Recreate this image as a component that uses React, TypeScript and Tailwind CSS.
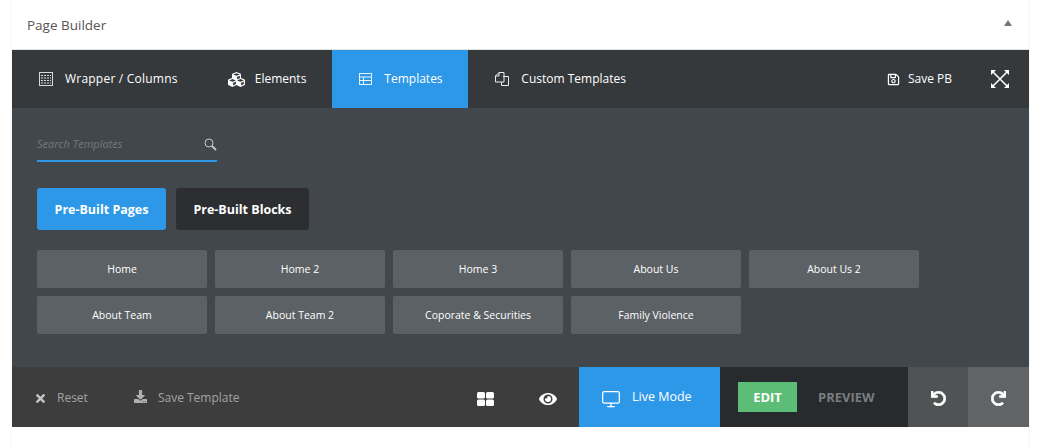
import React from 'react';
import { FaCubes, FaTimes, FaDownload, FaEye, FaUndo, FaRedo, FaRegSave } from 'react-icons/fa';
import { Monitor } from 'lucide-react';

const row1 = ['Home', 'Home 2', 'Home 3', 'About Us', 'About Us 2'];
const row2 = ['About Team', 'About Team 2', 'Coporate & Securities', 'Family Violence'];

function WrapperIcon() {
  return (
    <svg width="14" height="14" viewBox="0 0 14 14" fill="none" stroke="#d8d8d8" strokeWidth="1">
      <rect x="0.5" y="0.5" width="13" height="13" />
      <path d="M2 3.5h10M2 6h10M2 8.5h10M2 11h10" strokeDasharray="2 1" />
    </svg>
  );
}

function TemplatesIcon() {
  return (
    <svg width="13" height="12" viewBox="0 0 13 12" fill="none" stroke="#e6f3fd" strokeWidth="1">
      <rect x="0.5" y="0.5" width="12" height="11" />
      <path d="M0.5 4h12M0.5 7.5h12M4.5 4v7.5" />
    </svg>
  );
}

function CustomTemplatesIcon() {
  return (
    <svg width="14" height="14" viewBox="0 0 14 14" fill="none" stroke="#ededed" strokeWidth="1">
      <path d="M8 4.5h5.5v9H6.5V10" />
      <path d="M4 .5h5v9.5H.5V4z" />
      <path d="M4 .5V4H.5" />
    </svg>
  );
}

function SearchIcon() {
  return (
    <svg width="13" height="13" viewBox="0 0 13 13" fill="none" stroke="#c8c8c8">
      <circle cx="5" cy="5" r="4" strokeWidth="1" />
      <path d="M8 8l4 4" strokeWidth="1.8" />
    </svg>
  );
}

function ExpandIcon() {
  return (
    <svg width="18" height="18" viewBox="0 0 18 18" fill="#ffffff" stroke="none">
      <path d="M2 2l14 14M16 2L2 16" stroke="#ffffff" strokeWidth="1.5" />
      <path d="M0 0h5L0 5zM18 0v5l-5-5zM0 18v-5l5 5zM18 18h-5l5-5z" />
    </svg>
  );
}

function WindowsIcon() {
  return (
    <svg width="17" height="14" viewBox="0 0 17 14" fill="#ffffff">
      <rect x="0" y="0" width="8" height="6.5" rx="1.5" />
      <rect x="9" y="0" width="8" height="6.5" rx="1.5" />
      <rect x="0" y="7.5" width="8" height="6.5" rx="1.5" />
      <rect x="9" y="7.5" width="8" height="6.5" rx="1.5" />
    </svg>
  );
}

function TemplateButton({ label }: { label: string }) {
  return (
    <div className="flex h-[38px] w-[170px] items-center justify-center rounded-[2px] bg-[#5c6165] pt-[1px] text-[10.5px] font-medium text-white">
      {label}
    </div>
  );
}

export default function App() {
  return (
    <div className="h-[447px] w-[1041px] bg-white font-['Open_Sans',sans-serif]">
      <div className="mx-[11px] h-full w-[1019px] border-x border-[#f6f6f6]">
        <div className="flex h-[50px] items-center justify-between border-b border-[#e5e5e5] px-[15px]">
          <span className="pt-[2px] text-[13.5px] font-medium text-[#555555]">Page Builder</span>
          <span className="mb-[4px] mr-[2px] h-0 w-0 border-x-[4px] border-b-[6px] border-x-transparent border-b-[#777777]" />
        </div>

        <div className="flex h-[58px] items-center whitespace-nowrap bg-[#36393c] text-[12px] font-medium text-white">
          <div className="flex h-full items-center gap-[12px] pl-[27px] pr-[26px]">
            <WrapperIcon />
            <span className="tracking-[0.22px]">Wrapper / Columns</span>
          </div>
          <div className="flex h-full items-center gap-[10px] pl-[24px] pr-[26px]">
            <FaCubes className="text-[17px]" />
            <span>Elements</span>
          </div>
          <div className="flex h-full w-[136px] items-center gap-[12px] bg-[#2e98e8] pl-[27px]">
            <TemplatesIcon />
            <span>Templates</span>
          </div>
          <div className="flex h-full items-center gap-[12px] pl-[27px]">
            <CustomTemplatesIcon />
            <span>Custom Templates</span>
          </div>
          <div className="ml-auto flex h-full items-center gap-[8px]">
            <FaRegSave className="text-[13px]" />
            <span>Save PB</span>
          </div>
          <div className="ml-[39px] mr-[20px] flex items-center">
            <ExpandIcon />
          </div>
        </div>

        <div className="h-[259px] bg-[#42474c] px-[25px] pt-[27px]">
          <div className="flex h-[27px] w-[180px] items-center justify-between border-b-2 border-[#2e98e8] pb-[6px]">
            <span className="text-[11px] italic text-[#737a80]">Search Templates</span>
            <SearchIcon />
          </div>
          <div className="mt-[26px] flex gap-[10px]">
            <div className="flex h-[42px] w-[129px] items-center justify-center rounded-[3px] bg-[#2e98e8] pt-[2px] text-[12.5px] font-bold text-white">
              Pre-Built Pages
            </div>
            <div className="flex h-[42px] w-[133px] items-center justify-center rounded-[3px] bg-[#2d2e31] pt-[2px] text-[12.5px] font-bold text-white">
              Pre-Built Blocks
            </div>
          </div>
          <div className="mt-[20px] flex gap-[8px]">
            {row1.map((label) => (
              <TemplateButton key={label} label={label} />
            ))}
          </div>
          <div className="mt-[8px] flex gap-[8px]">
            {row2.map((label) => (
              <TemplateButton key={label} label={label} />
            ))}
          </div>
        </div>

        <div className="flex h-[60px] items-stretch whitespace-nowrap bg-[#3d3d3d] text-[12px] text-[#a3a3a3]">
          <div className="flex w-[465px] shrink-0 items-center pl-[22px] pt-[2px]">
            <FaTimes className="text-[13px] text-[#c4c4c4]" />
            <span className="ml-[10px]">Reset</span>
            <FaDownload className="mb-[3px] ml-[46px] text-[13px] text-[#b0b0b0]" />
            <span className="ml-[11px]">Save Template</span>
          </div>
          <div className="flex items-center pt-[3px]">
            <WindowsIcon />
          </div>
          <div className="ml-[45px] flex items-center pt-[3px]">
            <FaEye className="text-[18px] text-white" />
          </div>
          <div className="ml-[22px] flex w-[141px] items-center gap-[11px] bg-[#2e98e8] pl-[22px] pt-[1px] text-[12.5px] font-medium text-white">
            <Monitor size={20} strokeWidth={1.5} className="mt-[2px]" />
            <span>Live Mode</span>
          </div>
          <div className="flex w-[188px] items-center bg-[#272b2d] pl-[18px] text-[13px] font-bold">
            <div className="flex h-[30px] w-[59px] items-center justify-center bg-[#5cbd76] pt-[1px] text-white">EDIT</div>
            <span className="ml-[21px] pt-[1px] text-[#7a7d7f]">PREVIEW</span>
          </div>
          <div className="flex w-[60px] items-center justify-center bg-[#505354] pt-[2px] text-white">
            <FaUndo className="text-[15px]" stroke="currentColor" strokeWidth={24} />
          </div>
          <div className="flex w-[61px] items-center justify-center bg-[#606467] pt-[2px] text-white">
            <FaRedo className="text-[15px]" stroke="currentColor" strokeWidth={24} />
          </div>
        </div>
      </div>
    </div>
  );
}
